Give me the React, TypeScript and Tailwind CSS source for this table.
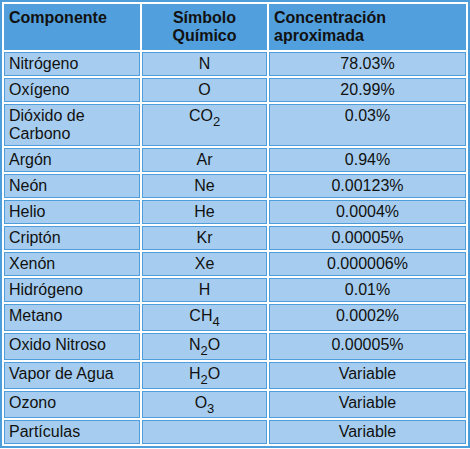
import React from "react";

type Row = { name: React.ReactNode; sym: React.ReactNode; conc: string };

const Sub = ({ children }: { children: React.ReactNode }) => (
  <span className="align-[-5px] text-[13px] leading-none">{children}</span>
);

const rows: Row[] = [
  { name: "Nitrógeno", sym: "N", conc: "78.03%" },
  { name: "Oxígeno", sym: "O", conc: "20.99%" },
  { name: <>Dióxido de<br />Carbono</>, sym: <>CO<Sub>2</Sub></>, conc: "0.03%" },
  { name: "Argón", sym: "Ar", conc: "0.94%" },
  { name: "Neón", sym: "Ne", conc: "0.00123%" },
  { name: "Helio", sym: "He", conc: "0.0004%" },
  { name: "Criptón", sym: "Kr", conc: "0.00005%" },
  { name: "Xenón", sym: "Xe", conc: "0.000006%" },
  { name: "Hidrógeno", sym: "H", conc: "0.01%" },
  { name: "Metano", sym: <>CH<Sub>4</Sub></>, conc: "0.0002%" },
  { name: "Oxido Nitroso", sym: <>N<Sub>2</Sub>O</>, conc: "0.00005%" },
  { name: "Vapor de Agua", sym: <>H<Sub>2</Sub>O</>, conc: "Variable" },
  { name: "Ozono", sym: <>O<Sub>3</Sub></>, conc: "Variable" },
  { name: "Partículas", sym: "", conc: "Variable" },
];

export default function App() {
  return (
    <div className="bg-white w-[470px] h-[449px] font-['Liberation_Sans',Arial,sans-serif] text-[16px] text-[#111]">
      <table className="table-fixed w-[470px] border-separate border-spacing-[2px] border-2 border-[#4e9ddb]">
        <thead>
          <tr>
            <th className="w-[136px] bg-[#519fdc] border border-[#519fdc] px-[4px] py-[4px] text-left align-top font-bold leading-[18px]">
              Componente
            </th>
            <th className="w-[125px] bg-[#519fdc] border border-[#519fdc] px-[4px] py-[4px] text-center align-top font-bold leading-[18px]">
              Símbolo<br />Químico
            </th>
            <th className="w-[197px] bg-[#519fdc] border border-[#519fdc] px-[4px] py-[4px] text-left align-top font-bold leading-[18px]">
              Concentración<br />aproximada
            </th>
          </tr>
        </thead>
        <tbody>
          {rows.map((r, i) => (
            <tr key={i}>
              <td className="bg-[#a6cdef] border border-[#4f9edb] px-[4px] py-[2px] text-left align-top leading-[18px]">
                {r.name}
              </td>
              <td className="bg-[#a6cdef] border border-[#4f9edb] px-[4px] py-[2px] text-center align-top leading-[18px]">
                {r.sym}
              </td>
              <td className="bg-[#a6cdef] border border-[#4f9edb] px-[4px] py-[2px] text-center align-top leading-[18px]">
                {r.conc}
              </td>
            </tr>
          ))}
        </tbody>
      </table>
    </div>
  );
}
